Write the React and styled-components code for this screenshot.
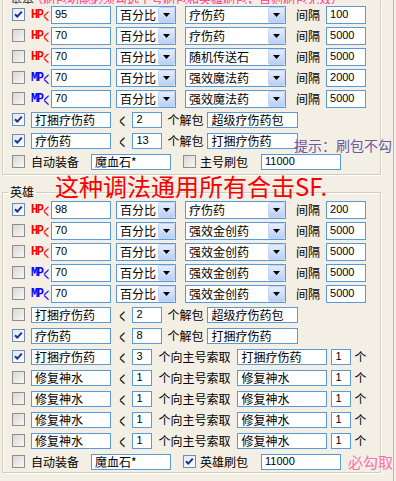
import React from "react";
import styled, { createGlobalStyle } from "styled-components";

const GlobalStyle = createGlobalStyle`
  * { box-sizing: border-box; }
  html, body { margin: 0; padding: 0; background: #f3efe5; }
  body {
    font-family: "Noto Sans CJK SC", sans-serif;
    font-size: 12px;
    color: #000;
  }
`;

const Page = styled.div`
  position: relative;
  width: 394px;
  height: 481px;
  border-right: 1px solid #c8b4b6;
  display: flex;
  flex-direction: column;
`;

const TopGroup = styled.div`
  margin-left: 2px;
  width: 379px;
  border: 1px solid #d0ccc0;
  border-top: none;
  box-shadow: inset 1px 0 0 #fff, 1px 1px 0 #fff;
  padding: 0 0 2px 9px;
`;

const HeroGroup = styled.fieldset`
  margin: 11px 0 0 2px;
  width: 379px;
  min-width: 0;
  border: 1px solid #d0ccc0;
  box-shadow: inset 1px 1px 0 #fff, 1px 1px 0 #fff;
  padding: 1px 0 0 9px;
`;

const Legend = styled.legend`
  margin-left: -4px;
  padding: 0 2px;
  font-size: 12px;
  line-height: 12px;
  height: 12px;
`;

const Strip = styled.div`
  height: 4px;
  overflow: hidden;
  display: flex;
  align-items: flex-end;
  white-space: nowrap;
`;

const StripText = styled.span`
  flex: none;
  color: ${(p) => p.$c};
  margin-left: ${(p) => p.$ml}px;
  font-size: 12px;
  line-height: 12px;
  margin-bottom: -1px;
`;

const Row = styled.div`
  display: flex;
  align-items: center;
  height: 21px;
  white-space: nowrap;
`;

const Box = styled.div`
  flex: none;
  display: flex;
  align-items: center;
  width: ${(p) => p.$w}px;
  height: ${(p) => p.$h || 16}px;
  margin-left: ${(p) => p.$ml || 0}px;
  padding-left: 3px;
  border: 1px solid #5b9bd5;
  background: #fff;
  overflow: hidden;
  font-family: ${(p) =>
    p.$num ? '"Liberation Sans", Arial, sans-serif' : '"Noto Sans CJK SC", sans-serif'};
  font-size: ${(p) => (p.$num ? 11 : 12)}px;
  line-height: 1;
`;

const Select = styled(Box)`
  padding: 0 0 0 3px;
`;

const DropBtn = styled.span`
  margin-left: auto;
  width: 17px;
  height: 100%;
  flex: none;
  display: flex;
  align-items: center;
  justify-content: center;
  border: 1px solid #c3d3f3;
  border-radius: 2px;
  background: linear-gradient(#e6eefc, #b9cff5);
`;

const Text = styled.span`
  flex: none;
  margin-left: ${(p) => p.$ml || 0}px;
  color: ${(p) => p.$c || "#000"};
  font-size: ${(p) => p.$fs || 12}px;
  line-height: 1;
`;

const Tag = styled.span`
  flex: none;
  width: 20px;
  margin-left: 6px;
  display: flex;
  align-items: center;
  color: ${(p) => p.$c};
  font-family: "Liberation Mono", monospace;
  font-weight: bold;
  font-size: 12px;
  letter-spacing: -1.5px;
`;

const Lt = styled.span`
  display: inline-block;
  flex: none;
  margin-left: ${(p) => p.$ml || 0}px;
  color: ${(p) => p.$c || "#000"};
  font-family: "Liberation Sans", Arial, sans-serif;
  font-weight: normal;
  font-size: 11px;
  letter-spacing: 0;
  transform: scale(0.85, 1.9);
`;

const CheckWrap = styled.span`
  flex: none;
  display: flex;
  width: 13px;
  height: 13px;
  margin-left: ${(p) => p.$ml || 0}px;
`;

const Banner = styled.div`
  position: absolute;
  left: 55px;
  top: 174px;
  color: #f80000;
  font-size: 24px;
  line-height: 24px;
  white-space: nowrap;
`;

const Hint = styled.div`
  position: absolute;
  left: 294px;
  top: 138px;
  color: #6a5aa2;
  font-size: 14px;
  line-height: 14px;
  white-space: nowrap;
`;

const Check = ({ on, ml }) => (
  <CheckWrap $ml={ml}>
    <svg width="13" height="13" viewBox="0 0 13 13">
      <defs>
        <linearGradient id="cbOff" x1="0" y1="0" x2="1" y2="1">
          <stop offset="0" stopColor="#d6d6d1" />
          <stop offset="1" stopColor="#f9f9f7" />
        </linearGradient>
        <linearGradient id="cbOn" x1="0" y1="0" x2="1" y2="1">
          <stop offset="0" stopColor="#dfe7f3" />
          <stop offset="1" stopColor="#ffffff" />
        </linearGradient>
      </defs>
      <rect
        x="0.5"
        y="0.5"
        width="12"
        height="12"
        fill={on ? "url(#cbOn)" : "url(#cbOff)"}
        stroke={on ? "#6f8db2" : "#8e8e8e"}
      />
      {on && (
        <path d="M3 6.2 L5.3 8.6 L9.8 3.6" fill="none" stroke="#1c2f8f" strokeWidth="2" />
      )}
    </svg>
  </CheckWrap>
);

const isNum = (v) => /^\d+$/.test(v);

const Field = ({ v, w, h, ml }) => (
  <Box $w={w} $h={h} $ml={ml} $num={isNum(v)}>
    {v}
  </Box>
);

const Combo = ({ v, w, ml }) => (
  <Select $w={w} $h={18} $ml={ml}>
    {v}
    <DropBtn>
      <svg width="7" height="4" viewBox="0 0 7 4">
        <path d="M0 0H7L3.5 4Z" fill="#000" />
      </svg>
    </DropBtn>
  </Select>
);

const PotionRow = ({ on, kind, val, item, gap }) => (
  <Row>
    <Check on={on} />
    <Tag $c={kind === "HP" ? "#ff0000" : "#0000ff"}>
      {kind}
      <Lt $c="inherit" $ml={1}>&lt;</Lt>
    </Tag>
    <Field v={val} w={60} h={18} />
    <Combo v="百分比" w={60} ml={5} />
    <Combo v={item} w={101} ml={9} />
    <Text $ml={10}>间隔</Text>
    <Field v={gap} w={40} h={18} ml={6} />
  </Row>
);

const UnpackRow = ({ on, item, n, pack }) => (
  <Row>
    <Check on={on} />
    <Field v={item} w={80} ml={6} />
    <Lt $ml={8}>&lt;</Lt>
    <Field v={n} w={30} ml={7} />
    <Text $ml={5}>个解包</Text>
    <Field v={pack} w={91} ml={4} />
  </Row>
);

const AskRow = ({ on, item, n, ask, m }) => (
  <Row>
    <Check on={on} />
    <Field v={item} w={80} ml={6} />
    <Lt $ml={8}>&lt;</Lt>
    <Field v={n} w={20} ml={7} />
    <Text $ml={6}>个向主号索取</Text>
    <Field v={ask} w={90} ml={7} />
    <Field v={m} w={20} ml={4} />
    <Text $ml={3}>个</Text>
  </Row>
);

const EquipRow = ({ on, refreshOn, refresh, note }) => (
  <Row>
    <Check on={on} />
    <Text $ml={6}>自动装备</Text>
    <Field v="魔血石*" w={80} ml={12} />
    <Check on={refreshOn} ml={12} />
    <Text $ml={4}>{refresh}</Text>
    <Field v="11000" w={80} ml={13} />
    {note && (
      <Text $ml={7} $fs={15} $c="#ff6fae">
        {note}
      </Text>
    )}
  </Row>
);

const mainPotions = [
  { on: true, kind: "HP", val: "95", item: "疗伤药", gap: "100" },
  { on: false, kind: "HP", val: "70", item: "疗伤药", gap: "5000" },
  { on: false, kind: "HP", val: "70", item: "随机传送石", gap: "5000" },
  { on: false, kind: "MP", val: "70", item: "强效魔法药", gap: "2000" },
  { on: false, kind: "MP", val: "70", item: "强效魔法药", gap: "5000" },
];

const heroPotions = [
  { on: true, kind: "HP", val: "98", item: "疗伤药", gap: "200" },
  { on: false, kind: "HP", val: "70", item: "强效金创药", gap: "5000" },
  { on: false, kind: "HP", val: "70", item: "强效金创药", gap: "5000" },
  { on: false, kind: "MP", val: "70", item: "强效金创药", gap: "5000" },
  { on: false, kind: "MP", val: "70", item: "强效金创药", gap: "5000" },
];

const heroAsks = [
  { on: true, item: "打捆疗伤药", n: "3", ask: "打捆疗伤药", m: "1" },
  { on: false, item: "修复神水", n: "1", ask: "修复神水", m: "1" },
  { on: false, item: "修复神水", n: "1", ask: "修复神水", m: "1" },
  { on: false, item: "修复神水", n: "1", ask: "修复神水", m: "1" },
  { on: false, item: "修复神水", n: "1", ask: "修复神水", m: "1" },
];

export default function App() {
  return (
    <>
      <GlobalStyle />
      <Page>
        <TopGroup>
          <Strip>
            <StripText $c="#444" $ml={-2}>基本</StripText>
            <StripText $c="#ff3c8c" $ml={-3}>
              （刷包功能必须勾选主号刷包和英雄刷包，否则刷包无效）
            </StripText>
          </Strip>
          {mainPotions.map((r, i) => (
            <PotionRow key={i} {...r} />
          ))}
          <UnpackRow on item="打捆疗伤药" n="2" pack="超级疗伤药包" />
          <UnpackRow on item="疗伤药" n="13" pack="打捆疗伤药" />
          <EquipRow on={false} refreshOn={false} refresh="主号刷包" />
        </TopGroup>

        <HeroGroup>
          <Legend>英雄</Legend>
          {heroPotions.map((r, i) => (
            <PotionRow key={i} {...r} />
          ))}
          <UnpackRow on={false} item="打捆疗伤药" n="2" pack="超级疗伤药包" />
          <UnpackRow on item="疗伤药" n="8" pack="打捆疗伤药" />
          {heroAsks.map((r, i) => (
            <AskRow key={i} {...r} />
          ))}
          <EquipRow on={false} refreshOn refresh="英雄刷包" note="必勾取" />
        </HeroGroup>

        <Hint>提示：刷包不勾</Hint>
        <Banner>这种调法通用所有合击SF.</Banner>
      </Page>
    </>
  );
}
